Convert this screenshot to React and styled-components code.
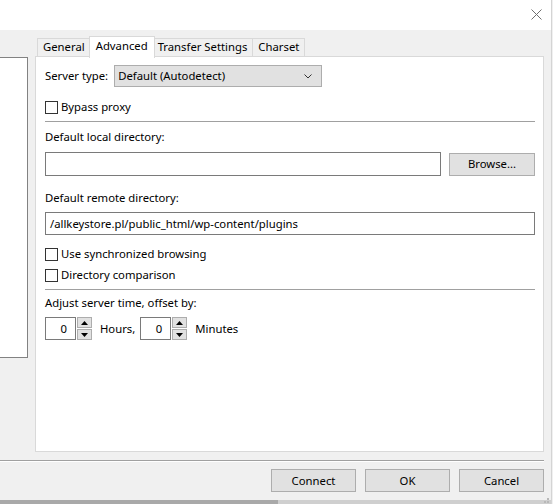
import React from "react";
import styled, { createGlobalStyle } from "styled-components";

const Global = createGlobalStyle`
  html, body { margin: 0; padding: 0; background: #f0f0f0; }
  body { font-family: "Segoe UI", "Noto Sans", sans-serif; font-size: 11.3px; line-height: 16px; color: #000; }
  * { box-sizing: border-box; }
`;

const Screen = styled.div`
  width: 553px;
  height: 504px;
  display: flex;
  overflow: hidden;
`;

const Dialog = styled.div`
  width: 552px;
  height: 504px;
  display: flex;
  flex-direction: column;
  background: #f0f0f0;
  border-right: 1px solid #d4d4d4;
  position: relative;
`;

const OuterEdge = styled.div`
  width: 1px;
  height: 504px;
  background: #f0f0f0;
`;

const TitleBar = styled.div`
  height: 30px;
  background: #fff;
  display: flex;
  justify-content: flex-end;
  align-items: flex-start;
  padding: 9px 9px 0 0;
  flex-shrink: 0;
`;

const Main = styled.div`
  display: flex;
  padding: 6px 7px 0 0;
  height: 422px;
  flex-shrink: 0;
`;

const SiteList = styled.div`
  width: 28px;
  height: 301px;
  margin-top: 21px;
  background: #fff;
  border: 1px solid #828282;
  border-left: none;
  flex-shrink: 0;
`;

const TabsArea = styled.div`
  margin-left: 7px;
  flex: 1;
  display: flex;
  flex-direction: column;
`;

const TabStrip = styled.div`
  display: flex;
  align-items: flex-end;
  height: 21px;
  padding-left: 2px;
  position: relative;
  z-index: 1;
`;

const Tab = styled.div`
  height: ${(p) => (p.$active ? "22px" : "19px")};
  padding: ${(p) => (p.$active ? "0 6px 3px" : "0 5px 1px")};
  margin: ${(p) => (p.$active ? "0 -2px -1px" : "0")};
  display: flex;
  align-items: center;
  background: ${(p) => (p.$active ? "#fff" : "#f0f0f0")};
  border: 1px solid #d9d9d9;
  border-bottom: ${(p) => (p.$active ? "none" : "1px solid #d9d9d9")};
  border-left: ${(p) => (p.$first || p.$active ? "1px solid #d9d9d9" : "none")};
  position: relative;
  z-index: ${(p) => (p.$active ? 2 : 1)};
  white-space: nowrap;
`;

const Panel = styled.div`
  flex: 1;
  background: #fff;
  border: 1px solid #d9d9d9;
  margin-top: -1px;
  padding: 8px 8px 0 9px;
  display: flex;
  flex-direction: column;
`;

const Row = styled.div`
  display: flex;
  align-items: center;
  margin-top: ${(p) => p.$mt || 0}px;
`;

const Label = styled.div`
  height: 16px;
  margin-top: ${(p) => p.$mt || 0}px;
  white-space: nowrap;
`;

const Select = styled.div`
  width: 208px;
  height: 22px;
  margin-left: 6px;
  background: #e1e1e1;
  border: 1px solid #adadad;
  display: flex;
  align-items: center;
  justify-content: space-between;
  padding: 0 9px 0 3px;
`;

const Check = styled.div`
  display: flex;
  align-items: center;
  height: 16px;
  margin-top: ${(p) => p.$mt || 0}px;
`;

const Box = styled.div`
  width: 13px;
  height: 13px;
  border: 1px solid #333;
  background: #fff;
  margin-right: 3px;
  flex-shrink: 0;
`;

const Sep = styled.div`
  height: 1px;
  background: #a0a0a0;
  flex-shrink: 0;
  margin-top: ${(p) => p.$mt || 0}px;
`;

const TextInput = styled.div`
  flex: 1;
  height: ${(p) => p.$h || 23}px;
  border: 1px solid #7a7a7a;
  background: #fff;
  display: flex;
  align-items: center;
  padding-left: 4px;
  white-space: nowrap;
`;

const Button = styled.div`
  width: ${(p) => p.$w || 85}px;
  height: 23px;
  background: #e1e1e1;
  border: 1px solid #adadad;
  display: flex;
  align-items: center;
  justify-content: center;
  margin-left: ${(p) => p.$ml || 0}px;
  flex-shrink: 0;
`;

const Spin = styled.div`
  display: flex;
  align-items: center;
  height: 23px;
`;

const SpinInput = styled.div`
  width: 31px;
  height: 23px;
  border: 1px solid #7a7a7a;
  background: #fff;
  display: flex;
  align-items: center;
  justify-content: flex-end;
  padding-right: 8px;
`;

const SpinButtons = styled.div`
  width: 15px;
  height: 23px;
  display: flex;
  flex-direction: column;
  margin-left: 1px;
  gap: 1px;
`;

const SpinHalf = styled.div`
  flex: 1;
  background: #e1e1e1;
  border: 1px solid #adadad;
  display: flex;
  align-items: center;
  justify-content: center;
`;

const SpinText = styled.div`
  margin: 0 5px 0 8px;
`;

const Footer = styled.div`
  display: flex;
  flex-direction: column;
  padding-right: 7px;
  margin-top: 8px;
`;

const FooterSep = styled.div`
  height: 2px;
  border-top: 1px solid #a0a0a0;
  border-bottom: 1px solid #fff;
`;

const ButtonRow = styled.div`
  display: flex;
  justify-content: flex-end;
  margin-top: 7px;
`;

const BottomStrip = styled.div`
  margin-top: auto;
  height: 4px;
  display: flex;
`;

const StripPart = styled.div`
  width: ${(p) => p.$w};
  flex: ${(p) => (p.$w ? "none" : 1)};
  background: ${(p) => p.$c};
`;

const Grip = styled.div`
  position: absolute;
  right: 2px;
  bottom: 2px;
  width: 8px;
  height: 8px;
`;

const Up = () => (
  <svg width="7" height="4" viewBox="0 0 7 4"><path d="M3.5 0 L7 4 L0 4 Z" fill="#000" /></svg>
);
const Down = () => (
  <svg width="7" height="4" viewBox="0 0 7 4"><path d="M0 0 L7 0 L3.5 4 Z" fill="#000" /></svg>
);

const SpinBox = ({ value }) => (
  <Spin>
    <SpinInput>{value}</SpinInput>
    <SpinButtons>
      <SpinHalf><Up /></SpinHalf>
      <SpinHalf><Down /></SpinHalf>
    </SpinButtons>
  </Spin>
);

export default function App() {
  return (
    <>
      <Global />
      <Screen>
        <Dialog>
          <TitleBar>
            <svg width="11" height="11" viewBox="0 0 11 11">
              <path d="M0.5 0.5 L10.5 10.5 M10.5 0.5 L0.5 10.5" stroke="#6f6f6f" strokeWidth="1" />
            </svg>
          </TitleBar>
          <Main>
            <SiteList />
            <TabsArea>
              <TabStrip>
                <Tab $first>General</Tab>
                <Tab $active>Advanced</Tab>
                <Tab>Transfer Settings</Tab>
                <Tab>Charset</Tab>
              </TabStrip>
              <Panel>
                <Row>
                  <Label>Server type:</Label>
                  <Select>
                    <span>Default (Autodetect)</span>
                    <svg width="8" height="5" viewBox="0 0 8 5">
                      <path d="M0.5 0.5 L4 4 L7.5 0.5" stroke="#333" strokeWidth="1" fill="none" />
                    </svg>
                  </Select>
                </Row>
                <Check $mt={12}>
                  <Box />
                  <span>Bypass proxy</span>
                </Check>
                <Sep $mt={6} />
                <Label $mt={7}>Default local directory:</Label>
                <Row $mt={7}>
                  <TextInput $h={24} />
                  <Button $w={86} $ml={8}>Browse...</Button>
                </Row>
                <Label $mt={14}>Default remote directory:</Label>
                <Row $mt={6}>
                  <TextInput>/allkeystore.pl/public_html/wp-content/plugins</TextInput>
                </Row>
                <Check $mt={11}>
                  <Box />
                  <span>Use synchronized browsing</span>
                </Check>
                <Check $mt={5}>
                  <Box />
                  <span>Directory comparison</span>
                </Check>
                <Sep $mt={6} />
                <Label $mt={5}>Adjust server time, offset by:</Label>
                <Row $mt={6}>
                  <SpinBox value="0" />
                  <SpinText>Hours,</SpinText>
                  <SpinBox value="0" />
                  <SpinText>Minutes</SpinText>
                </Row>
              </Panel>
            </TabsArea>
          </Main>
          <Footer>
            <FooterSep />
            <ButtonRow>
              <Button>Connect</Button>
              <Button $ml={9}>OK</Button>
              <Button $ml={9}>Cancel</Button>
            </ButtonRow>
          </Footer>
          <BottomStrip>
            <StripPart $w="278px" $c="#a9a9a9" />
            <StripPart $c="#cfcfcf" />
          </BottomStrip>
          <Grip>
            <svg width="8" height="8" viewBox="0 0 8 8">
              <rect x="6" y="0" width="2" height="2" fill="#b8b8b8" />
              <rect x="3" y="3" width="2" height="2" fill="#b8b8b8" />
              <rect x="6" y="3" width="2" height="2" fill="#b8b8b8" />
              <rect x="0" y="6" width="2" height="2" fill="#b8b8b8" />
              <rect x="3" y="6" width="2" height="2" fill="#b8b8b8" />
              <rect x="6" y="6" width="2" height="2" fill="#b8b8b8" />
            </svg>
          </Grip>
        </Dialog>
        <OuterEdge />
      </Screen>
    </>
  );
}
